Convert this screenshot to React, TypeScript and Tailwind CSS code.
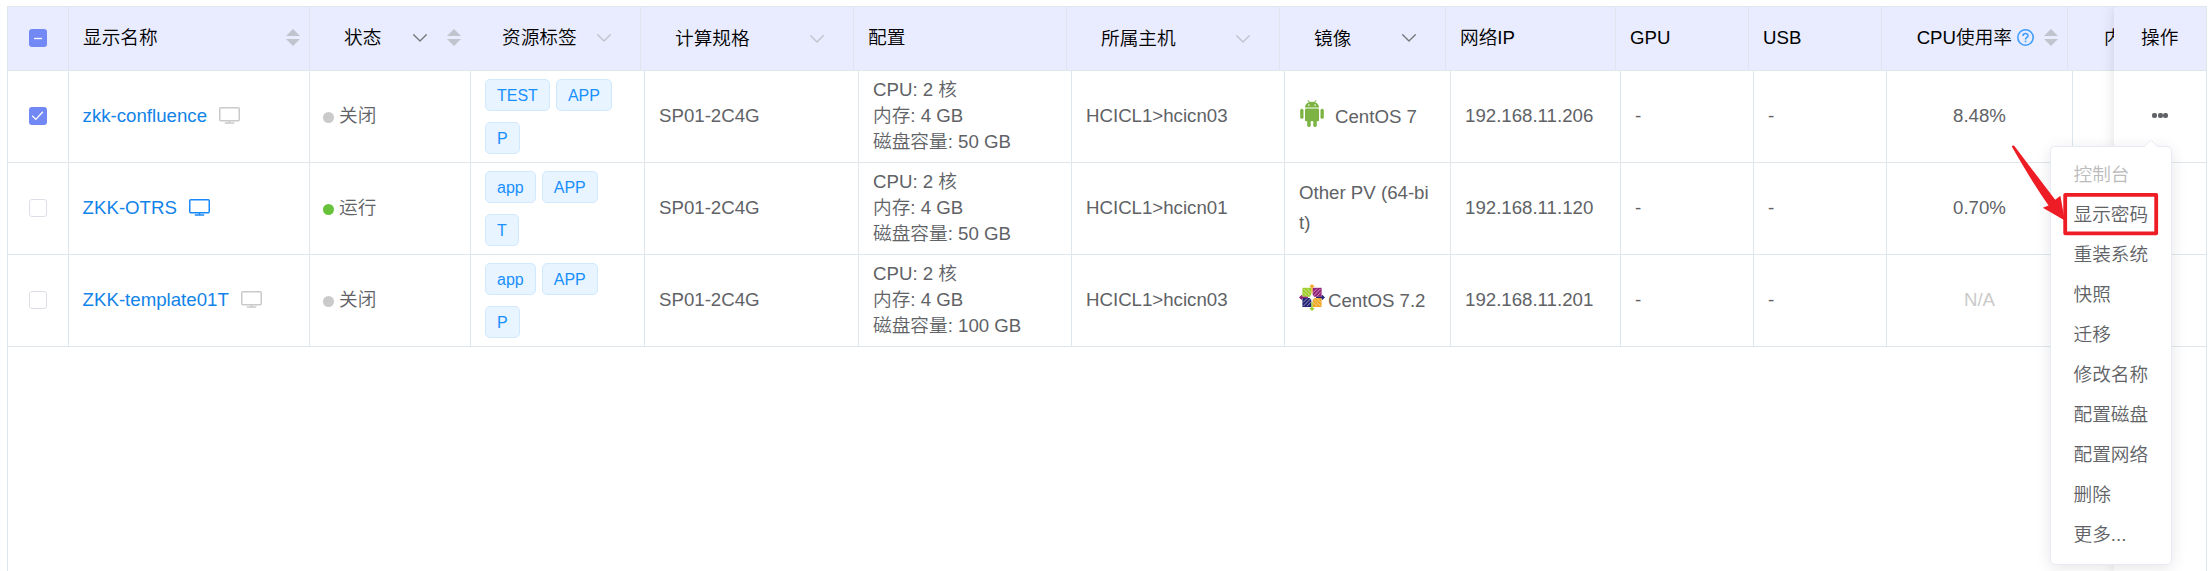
import React from "react";

type OsIcon = "android" | "centos" | null;

interface Vm {
  name: string;
  running: boolean;
  checked: boolean;
  tags: string[];
  disk: string;
  host: string;
  os: OsIcon;
  image: string;
  ip: string;
  cpu: string;
}

const vms: Vm[] = [
  { name: "zkk-confluence", running: false, checked: true, tags: ["TEST", "APP", "P"], disk: "50 GB", host: "HCICL1>hcicn03", os: "android", image: "CentOS 7", ip: "192.168.11.206", cpu: "8.48%" },
  { name: "ZKK-OTRS", running: true, checked: false, tags: ["app", "APP", "T"], disk: "50 GB", host: "HCICL1>hcicn01", os: null, image: "Other PV (64-bit)", ip: "192.168.11.120", cpu: "0.70%" },
  { name: "ZKK-template01T", running: false, checked: false, tags: ["app", "APP", "P"], disk: "100 GB", host: "HCICL1>hcicn03", os: "centos", image: "CentOS 7.2", ip: "192.168.11.201", cpu: "N/A" },
];

const menuItems = ["控制台", "显示密码", "重装系统", "快照", "迁移", "修改名称", "配置磁盘", "配置网络", "删除", "更多..."];

function SortIcon() {
  return (
    <svg width="14" height="17" viewBox="0 0 14 17" className="shrink-0" fill="#c0c4cc">
      <path d="M7 0 L14 7 H0 Z" />
      <path d="M0 10 H14 L7 17 Z" />
    </svg>
  );
}

function Chevron({ dark = false }: { dark?: boolean }) {
  return (
    <svg width="14" height="8" viewBox="0 0 14 8" className="shrink-0" fill="none" stroke={dark ? "#77797f" : "#c0c4cc"} strokeWidth="1.4" strokeLinecap="round" strokeLinejoin="round">
      <path d="M0.7 0.8 L7 7.1 L13.3 0.8" />
    </svg>
  );
}

function Checkbox({ state }: { state: "on" | "off" | "mixed" }) {
  if (state === "off") return <span className="size-[18px] rounded-[3px] border border-[#dcdfe6] bg-white" />;
  return (
    <span className="flex size-[18px] items-center justify-center rounded-[3px] bg-[#7288f4]">
      <svg width="18" height="18" viewBox="0 0 18 18" fill="none" stroke="#fff" strokeWidth="1.3">
        {state === "on" ? <path d="M3.2 8.8 L6.8 12.4 L13.9 4.8" /> : <path d="M5 9.5 H13" />}
      </svg>
    </span>
  );
}

function Monitor({ active }: { active: boolean }) {
  return (
    <svg width="21" height="17" viewBox="0 0 21 17" className="shrink-0" fill="none" stroke={active ? "#1989fa" : "#cacaca"} strokeWidth="1.5">
      <rect x="0.75" y="0.75" width="19.5" height="13" rx="1" />
      <path d="M10.5 14 V16 M5.8 16 H15.2" />
    </svg>
  );
}

function Android() {
  return (
    <svg width="24" height="27" viewBox="0 0 24 27" className="shrink-0" fill="#7cb342">
      <path d="M5 7.6 C5 4.7 7 2.9 8.9 2.3 L7.3 0.4 L8 0 L9.9 2 Q12 1.4 14.1 2 L16 0 L16.7 0.4 L15.1 2.3 C17 2.9 19 4.7 19 7.6 Z" />
      <rect x="5" y="8.6" width="14" height="12.6" rx="1" />
      <rect x="0.2" y="8.8" width="3.3" height="10" rx="1.6" />
      <rect x="20.5" y="8.8" width="3.3" height="10" rx="1.6" />
      <rect x="7.2" y="19" width="3.5" height="8" rx="1.4" />
      <rect x="13.3" y="19" width="3.5" height="8" rx="1.4" />
      <circle cx="8.9" cy="5.1" r="0.8" fill="#fff" />
      <circle cx="15.1" cy="5.1" r="0.8" fill="#fff" />
    </svg>
  );
}

function CentOs() {
  return (
    <svg width="26" height="27" viewBox="0 0 26 27" className="shrink-0">
      <rect x="3.4" y="3.8" width="9" height="9" fill="#9ccd2a" />
      <rect x="13.6" y="3.8" width="9" height="9" fill="#932279" />
      <rect x="3.4" y="14" width="9" height="9" fill="#262577" />
      <rect x="13.6" y="14" width="9" height="9" fill="#efa724" />
      <g fill="none" stroke="#fff" strokeWidth="0.7" strokeOpacity="0.75">
        <path d="M4.5 4.9 L21.5 21.9 M21.5 4.9 L4.5 21.9" />
        <path d="M8 4.6 L12.2 8.8 M4.2 8.4 L8.4 12.6 M18 4.6 L13.8 8.8 M21.8 8.4 L17.6 12.6 M8 22.2 L12.2 18 M4.2 18.4 L8.4 14.2 M18 22.2 L13.8 18 M21.8 18.4 L17.6 14.2" />
      </g>
      <path d="M13 0 L15.6 2.8 L13.6 3.6 V9 H12.4 V3.6 L10.4 2.8 Z" fill="#efa724" />
      <path d="M13 27 L15.6 24.2 L13.6 23.4 V18 H12.4 V23.4 L10.4 24.2 Z" fill="#9ccd2a" />
      <path d="M0 13.4 L2.8 10.8 L3.6 12.8 H9 V14 H3.6 L2.8 16 Z" fill="#932279" />
      <path d="M26 13.4 L23.2 10.8 L22.4 12.8 H17 V14 H22.4 L23.2 16 Z" fill="#262577" />
      <path d="M13 9 L14 12.4 L17.4 13.4 L14 14.4 L13 17.8 L12 14.4 L8.6 13.4 L12 12.4 Z" fill="#fff" />
      <circle cx="13" cy="13.4" r="2" fill="#fff" />
    </svg>
  );
}

function Help() {
  return (
    <svg width="17" height="17" viewBox="0 0 17 17" className="shrink-0" fill="none" stroke="#409eff" strokeWidth="1.6">
      <circle cx="8.5" cy="8.5" r="7.7" />
      <path d="M6 7 C6 3.7 11 3.8 11 6.7 C11 8.5 8.5 8.5 8.5 10.5" />
      <path d="M8.5 11.6 V13.2" />
    </svg>
  );
}

function Th({ className, children }: { className: string; children?: React.ReactNode }) {
  return <div className={"flex h-full shrink-0 items-center border-[#dfe4ed] pb-0.5 " + className}>{children}</div>;
}

function Td({ className, children }: { className: string; children?: React.ReactNode }) {
  return <div className={"flex h-full shrink-0 items-center border-r border-[#dfe6ec] " + className}>{children}</div>;
}

function HeaderRow() {
  return (
    <div className="flex h-16 w-[2200px] border-b border-[#dfe6ec] bg-[#e9ecfe] whitespace-nowrap text-black">
      <Th className="w-[61px] justify-center border-r"><Checkbox state="mixed" /></Th>
      <Th className="w-[241px] justify-between border-r pr-[9px] pl-[14px]"><span>显示名称</span><SortIcon /></Th>
      <Th className="w-[161px] pl-[34px]">
        <span className="w-[69px] pt-px">状态</span><Chevron dark /><span className="ml-[20px] flex"><SortIcon /></span>
      </Th>
      <Th className="w-[170px] justify-between border-r pr-[29px] pl-[31px]"><span>资源标签</span><Chevron /></Th>
      <Th className="w-[213px] justify-between border-r pr-[29px] pl-[34px]"><span className="pt-0.5">计算规格</span><span className="flex pt-0.5"><Chevron /></span></Th>
      <Th className="w-[213px] border-r pl-[14px]">配置</Th>
      <Th className="w-[213px] justify-between border-r pr-[29px] pl-[34px]"><span className="pt-0.5">所属主机</span><span className="flex pt-0.5"><Chevron /></span></Th>
      <Th className="w-[166px] justify-between border-r pr-[29px] pl-[34px]"><span className="pt-0.5">镜像</span><Chevron dark /></Th>
      <Th className="w-[170px] border-r pl-[14px]">网络IP</Th>
      <Th className="w-[133px] border-r pl-[14px]">GPU</Th>
      <Th className="w-[133px] border-r pl-[14px]">USB</Th>
      <Th className="w-[186px] justify-end border-r pr-[9px]">
        <span>CPU使用率</span><span className="mr-[10px] ml-[5px] flex"><Help /></span><SortIcon />
      </Th>
      <Th className="w-[120px] pl-[36px]">内</Th>
    </div>
  );
}

function Row({ vm }: { vm: Vm }) {
  return (
    <div className="flex h-[92px] w-[2200px] border-b border-[#dfe6ec]">
      <Td className="w-[61px] justify-center pb-px"><Checkbox state={vm.checked ? "on" : "off"} /></Td>
      <Td className="w-[241px] gap-3 pb-px pl-[13.6px] text-[#1283e8]"><span>{vm.name}</span><span className="flex pb-px"><Monitor active={vm.running} /></span></Td>
      <Td className="w-[161px] gap-[5px] pb-0.5 pl-[13px]">
        <span className={"mt-[4px] size-[11px] rounded-full " + (vm.running ? "bg-[#67c23a]" : "bg-[#cacaca]")} />
        <span>{vm.running ? "运行" : "关闭"}</span>
      </Td>
      <Td className="w-[174px] pl-[14px]">
        <div className="flex w-[140px] flex-wrap gap-x-[6px] gap-y-[11px]">
          {vm.tags.map((t) => (
            <span key={t} className="h-8 rounded-[5px] border border-[#d1e9ff] bg-[#e8f4ff] px-[11px] text-base leading-[32px] text-[#1890ff]">{t}</span>
          ))}
        </div>
      </Td>
      <Td className="w-[214px] pb-px pl-[14px]">SP01-2C4G</Td>
      <Td className="w-[213px] pb-px pl-[14px]">
        <div className="flex flex-col">
          <span>CPU: 2 核</span>
          <span>内存: 4 GB</span>
          <span>磁盘容量: {vm.disk}</span>
        </div>
      </Td>
      <Td className="w-[213px] pb-px pl-[14px]">{vm.host}</Td>
      <Td className="w-[166px] pr-[14px] pb-px pl-[14px]">
        {vm.os === "android" && <span className="mr-[11px] ml-px flex pb-[5px]"><Android /></span>}
        {vm.os === "centos" && <span className="mr-[3px] flex pb-[5px]"><CentOs /></span>}
        <span className={vm.os ? "pt-px" : "leading-[30px] break-all"}>{vm.image}</span>
      </Td>
      <Td className="w-[170px] pb-px pl-[14px]">{vm.ip}</Td>
      <Td className="w-[133px] pb-px pl-[14px]">-</Td>
      <Td className="w-[133px] pb-px pl-[14px]">-</Td>
      <Td className="w-[186px] justify-center pb-px"><span className={vm.cpu === "N/A" ? "text-[#cacaca]" : ""}>{vm.cpu}</span></Td>
    </div>
  );
}

function ActionMenu() {
  return (
    <div className="absolute top-[146px] left-[2050px] z-20 h-[419px] w-[122px] rounded-[5px] border border-[#e6ebf5] bg-white pt-[8px] pl-[22.5px] shadow-[0_3px_16px_rgba(0,0,0,0.1)]">
      <svg width="14" height="8" viewBox="0 0 14 8" className="absolute -top-2 left-[93px]">
        <path d="M0 8 L7 1 L14 8" fill="#fff" stroke="#e6ebf5" />
      </svg>
      {menuItems.map((item, i) => (
        <div key={item} className={"h-10 leading-10 whitespace-nowrap " + (i === 0 ? "text-[#bbbbbb]" : "text-[#606266]")}>{item}</div>
      ))}
    </div>
  );
}

function Callout() {
  return (
    <svg width="150" height="100" viewBox="2010 140 150 100" className="absolute top-[140px] left-[2010px] z-30">
      <rect x="2065.2" y="194.8" width="91" height="38.5" fill="none" stroke="#ee1c24" strokeWidth="3.8" strokeLinejoin="round" />
      <path d="M2011.8 146.6 Q2012.5 145.2 2014.2 145.8 L2055.2 199.8 L2060.4 195.8 L2064.8 220.5 L2042.8 207.8 L2048.6 205.6 Q2032 182 2011.8 146.6 Z" fill="#ee1c24" />
    </svg>
  );
}

export default function App() {
  return (
    <div className="relative h-[571px] w-[2212px] overflow-hidden bg-white pt-[6px] pl-[7px] font-['Liberation_Sans','Noto_Sans_CJK_SC',sans-serif] text-[18.667px] leading-[26px] font-[350] text-[#606266]">
      <div className="flex h-[565px] w-[2200px] overflow-hidden border-x border-t border-[#dfe6ec]">
        <div className="w-[2106px] shrink-0 overflow-hidden">
          <HeaderRow />
          {vms.map((vm) => <Row key={vm.name} vm={vm} />)}
        </div>
        <div className="w-[92px] shrink-0 bg-white shadow-[0_0_13px_rgba(0,0,0,0.12)]">
          <div className="flex h-16 items-center border-b border-[#dfe6ec] bg-[#e9ecfe] pb-0.5 pl-[27px] text-black">操作</div>
          {vms.map((vm) => (
            <div key={vm.name} className="flex h-[92px] items-center justify-center gap-[0.5px] border-b border-[#dfe6ec] pb-[3px]">
              <span className="size-[5px] rounded-[2px] bg-[#606266]" />
              <span className="size-[5px] rounded-[2px] bg-[#606266]" />
              <span className="size-[5px] rounded-[2px] bg-[#606266]" />
            </div>
          ))}
        </div>
      </div>
      <ActionMenu />
      <Callout />
    </div>
  );
}
